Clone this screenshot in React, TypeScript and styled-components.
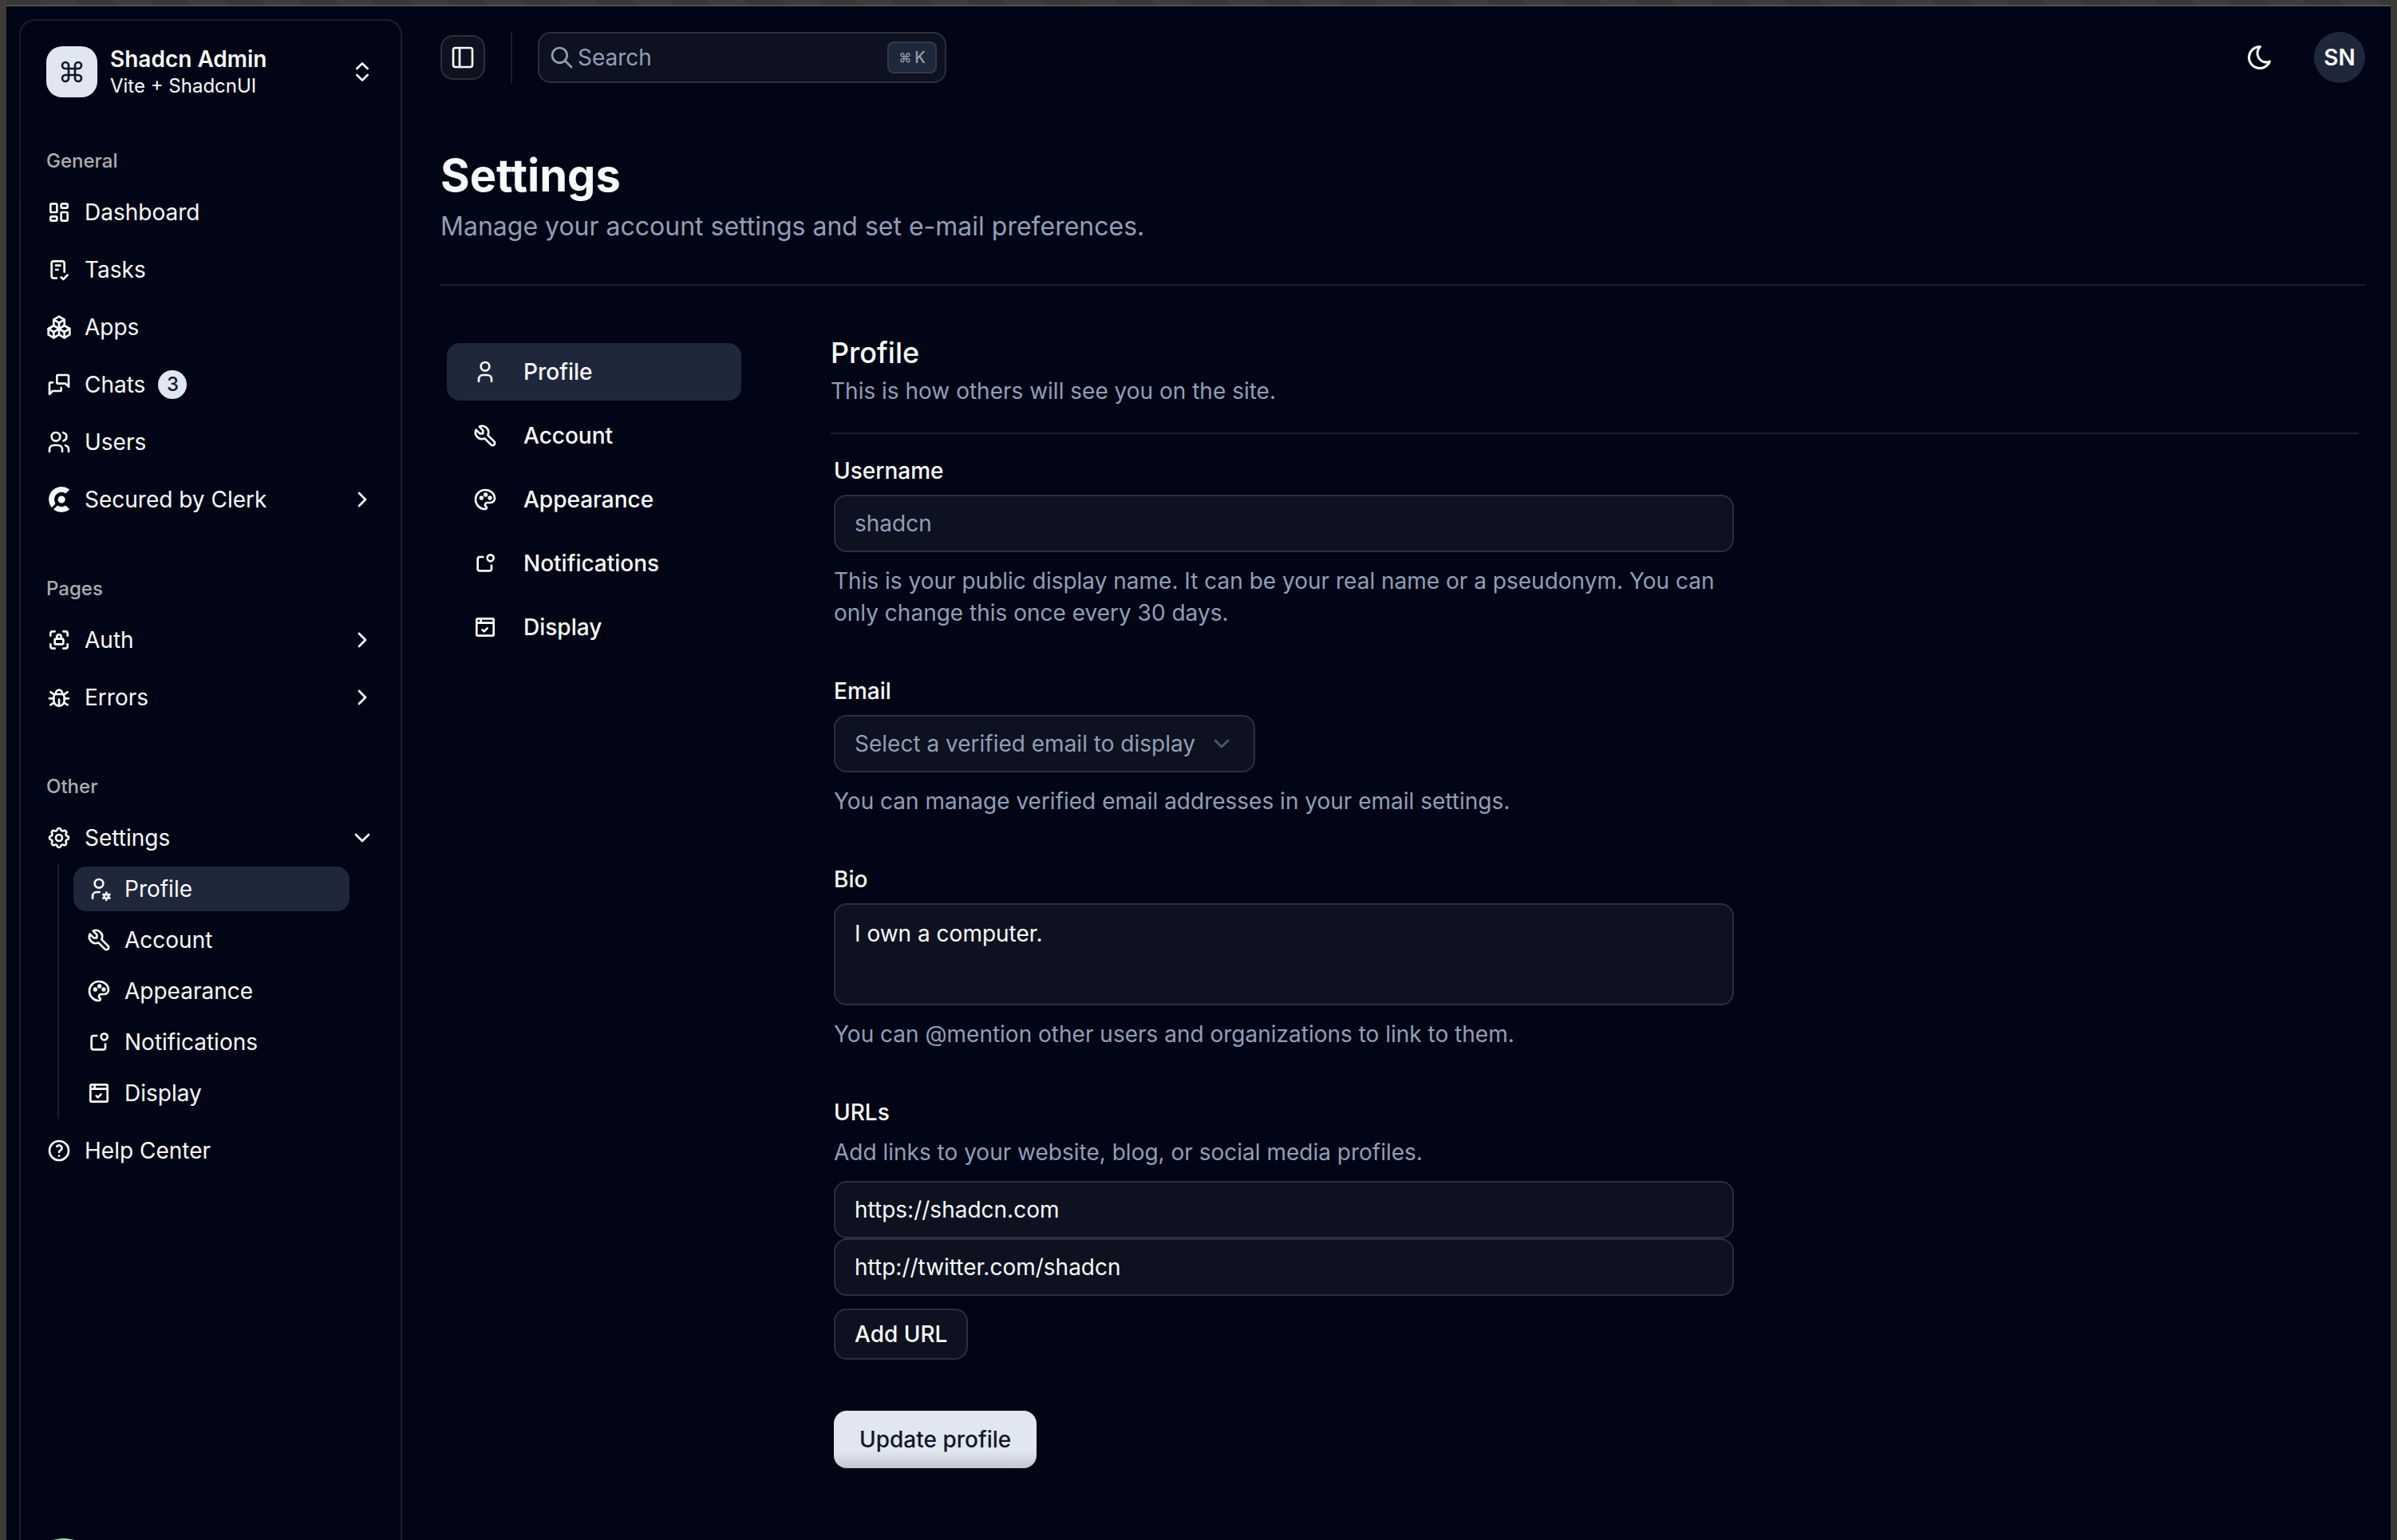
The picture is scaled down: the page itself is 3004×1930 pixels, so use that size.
import React from "react";
import styled, { createGlobalStyle, css } from "styled-components";
import {
  TbLayoutDashboard,
  TbChecklist,
  TbPackages,
  TbMessages,
  TbUsers,
  TbLockAccess,
  TbBug,
  TbSettings,
  TbUserCog,
  TbUser,
  TbTool,
  TbPalette,
  TbNotification,
  TbBrowserCheck,
  TbHelp,
  TbSearch,
  TbMoon,
} from "react-icons/tb";
import { SiClerk } from "react-icons/si";
import { ChevronRight, ChevronDown, ChevronsUpDown, Command, PanelLeft } from "lucide-react";

const color = {
  background: "#020515",
  foreground: "#f8fafc",
  muted: "#909fb5",
  accent: "#1f273a",
  primary: "#e2e6f0",
  onPrimary: "#0f172b",
  line: "rgba(255, 255, 255, 0.1)",
  fieldLine: "rgba(255, 255, 255, 0.17)",
  field: "rgba(255, 255, 255, 0.05)",
};

const GlobalStyle = createGlobalStyle`
  *, *::before, *::after { box-sizing: border-box; }
  body {
    margin: 0;
    background: #3c3b35;
    color: ${color.foreground};
    font-family: Inter, "Liberation Sans", sans-serif;
    font-size: 28px;
    line-height: 40px;
  }
  button, input, select, textarea { font: inherit; color: inherit; margin: 0; }
  button { cursor: pointer; }
  a { color: inherit; text-decoration: none; }
  h1, h2, p, ul { margin: 0; padding: 0; }
  ul { list-style: none; }
  svg { flex-shrink: 0; display: block; }
`;

const Desktop = styled.div`
  height: 100vh;
  overflow: hidden;
  display: flex;
  flex-direction: column;
`;

const TitleEdge = styled.div`
  flex: 0 0 8px;
  margin: 0 8px;
  border-bottom: 2px solid #505050;
  background: repeating-linear-gradient(37deg, #373737 0 28px, #3d3d3d 28px 56px);
`;

const Window = styled.div`
  flex: 1;
  min-height: 0;
  margin: 0 8px;
  display: flex;
  overflow: hidden;
  background: ${color.background};
`;

const SidebarRail = styled.aside`
  flex: 0 0 512px;
  padding: 16px 16px 0;
  display: flex;
`;

const Sidebar = styled.div`
  flex: 1;
  min-width: 0;
  padding: 16px;
  border: 2px solid ${color.line};
  border-bottom: 0;
  border-radius: 20px 20px 0 0;
  display: flex;
  flex-direction: column;
`;

const TeamButton = styled.button`
  height: 96px;
  padding: 0 16px;
  border: 0;
  background: none;
  display: flex;
  align-items: center;
  gap: 16px;
  text-align: left;
`;

const TeamLogo = styled.span`
  width: 64px;
  height: 64px;
  border-radius: 20px;
  display: grid;
  place-items: center;
  background: ${color.primary};
  color: ${color.onPrimary};
`;

const TeamText = styled.span`
  flex: 1;
  display: grid;
`;

const TeamName = styled.span`
  font-weight: 600;
  line-height: 36px;
`;

const TeamPlan = styled.span`
  font-size: 24px;
  line-height: 32px;
`;

const Group = styled.section`
  padding: 16px 0;
  & + & { margin-top: 16px; }
`;

const Nav = styled.nav`
  padding-top: 16px;
`;

const GroupLabel = styled.h2`
  height: 64px;
  padding: 0 16px;
  display: flex;
  align-items: center;
  font-size: 24px;
  font-weight: 500;
  color: rgba(250, 250, 250, 0.7);
`;

const MenuList = styled.ul`
  display: grid;
  gap: 8px;
`;

const menuRow = css`
  width: 100%;
  height: 64px;
  padding: 0 16px;
  display: flex;
  align-items: center;
  gap: 16px;
`;

const MenuLink = styled.a`${menuRow}`;

const MenuToggle = styled.button`
  ${menuRow}
  border: 0;
  background: none;
  text-align: left;
  & > :last-child { margin-left: auto; }
`;

const Count = styled.span`
  height: 36px;
  min-width: 36px;
  padding: 0 8px;
  border-radius: 18px;
  display: grid;
  place-items: center;
  background: ${color.primary};
  color: ${color.onPrimary};
  font-size: 24px;
  font-weight: 500;
  line-height: 32px;
`;

const SubList = styled.ul`
  margin: 0 26px 0 30px;
  padding: 4px 22px 4px 18px;
  border-left: 2px solid ${color.line};
  display: grid;
  gap: 8px;
`;

const SubLink = styled.a<{ $active?: boolean }>`
  height: 56px;
  padding: 0 16px;
  border-radius: 16px;
  display: flex;
  align-items: center;
  gap: 16px;
  background: ${(p) => (p.$active ? color.accent : "transparent")};
`;

const Page = styled.div`
  flex: 1;
  min-width: 0;
`;

const Header = styled.header`
  height: 128px;
  padding: 0 32px;
  display: flex;
  align-items: center;
  gap: 32px;
`;

const outlined = css`
  border: 2px solid ${color.fieldLine};
  border-radius: 16px;
  background: ${color.field};
  background-clip: padding-box;
`;

const PanelButton = styled.button`
  ${outlined}
  width: 56px;
  height: 56px;
  padding: 0;
  display: grid;
  place-items: center;
`;

const HeaderRule = styled.span`
  width: 2px;
  height: 64px;
  background: ${color.line};
`;

const SearchButton = styled.button`
  ${outlined}
  width: 512px;
  height: 64px;
  padding: 0 10px 0 12px;
  display: flex;
  align-items: center;
  gap: 4px;
  color: ${color.muted};
`;

const Shortcut = styled.kbd`
  height: 40px;
  margin-left: auto;
  padding: 0 12px;
  border: 2px solid #313a4e;
  border-radius: 8px;
  display: flex;
  align-items: center;
  gap: 4px;
  background: ${color.accent};
  font-family: inherit;
  font-size: 20px;
  font-weight: 500;
`;

const ShortcutSymbol = styled.span`
  font-size: 16px;
`;

const HeaderActions = styled.div`
  margin-left: auto;
  display: flex;
  align-items: center;
  gap: 32px;
`;

const ThemeButton = styled.button`
  width: 72px;
  height: 72px;
  padding: 0;
  border: 0;
  background: none;
  display: grid;
  place-items: center;
`;

const Avatar = styled.button`
  width: 64px;
  height: 64px;
  padding: 0;
  border: 0;
  border-radius: 50%;
  background: ${color.accent};
  font-weight: 600;
`;

const Main = styled.main`
  padding: 48px 32px;
`;

const PageTitle = styled.h1`
  font-size: 56px;
  font-weight: 700;
  line-height: 72px;
`;

const PageIntro = styled.p`
  margin-top: 4px;
  font-size: 32px;
  line-height: 48px;
  color: ${color.muted};
`;

const Rule = styled.hr<{ $space: number }>`
  height: 2px;
  margin: ${(p) => p.$space}px 0;
  border: 0;
  background: ${color.line};
`;

const Columns = styled.div`
  display: grid;
  grid-template-columns: 393px minmax(0, 1fr);
  gap: 96px;
`;

const SettingsNav = styled.nav`
  padding: 24px 16px 0 8px;
`;

const SettingsLinks = styled.ul`
  display: grid;
  gap: 8px;
`;

const SettingsLink = styled.a<{ $active?: boolean }>`
  height: 72px;
  padding: 0 32px;
  border-radius: 16px;
  display: flex;
  align-items: center;
  gap: 32px;
  font-weight: 500;
  background: ${(p) => (p.$active ? color.accent : "transparent")};
`;

const Section = styled.section`
  padding: 8px 8px 0 0;
`;

const SectionTitle = styled.h2`
  font-size: 36px;
  font-weight: 500;
  line-height: 56px;
`;

const Hint = styled.p`
  color: ${color.muted};
`;

const Form = styled.form`
  max-width: 1132px;
  padding-left: 4px;
  display: grid;
  gap: 64px;
`;

const Field = styled.div`
  display: grid;
  justify-items: start;
  gap: 16px;
`;

const Label = styled.label`
  font-weight: 500;
  line-height: 28px;
`;

const TextInput = styled.input`
  ${outlined}
  width: 100%;
  height: 72px;
  padding: 0 24px;
  &::placeholder { color: ${color.muted}; opacity: 1; }
`;

const TextArea = styled.textarea`
  ${outlined}
  display: block;
  width: 100%;
  height: 128px;
  padding: 16px 24px;
  resize: none;
`;

const SelectBox = styled.div`
  position: relative;
  color: ${color.muted};
  & > svg {
    position: absolute;
    top: 20px;
    right: 26px;
    opacity: 0.5;
    pointer-events: none;
  }
`;

const Select = styled.select`
  ${outlined}
  appearance: none;
  height: 72px;
  padding: 0 72px 0 24px;
`;

const Stack = styled.div`
  width: 100%;
`;

const AddButton = styled.button`
  ${outlined}
  height: 64px;
  padding: 0 24px;
  font-weight: 500;
`;

const SubmitButton = styled.button`
  justify-self: start;
  height: 72px;
  padding: 0 32px;
  border: 0;
  border-radius: 16px;
  background: linear-gradient(to bottom, ${color.primary} 70%, #c3c7d0 100%);
  color: ${color.onPrimary};
  font-weight: 500;
`;

const HelperBubble = styled.button`
  position: fixed;
  left: 34px;
  bottom: -90px;
  width: 92px;
  height: 92px;
  padding: 0;
  border: 0;
  border-radius: 50%;
  background: #a6d3a6;
`;

const general = [
  { label: "Dashboard", icon: TbLayoutDashboard },
  { label: "Tasks", icon: TbChecklist },
  { label: "Apps", icon: TbPackages },
  { label: "Chats", icon: TbMessages, count: "3" },
  { label: "Users", icon: TbUsers },
];

const pages = [
  { label: "Auth", icon: TbLockAccess },
  { label: "Errors", icon: TbBug },
];

const settings = [
  { label: "Profile", icon: TbUserCog, pageIcon: TbUser },
  { label: "Account", icon: TbTool, pageIcon: TbTool },
  { label: "Appearance", icon: TbPalette, pageIcon: TbPalette },
  { label: "Notifications", icon: TbNotification, pageIcon: TbNotification },
  { label: "Display", icon: TbBrowserCheck, pageIcon: TbBrowserCheck },
];

function AppSidebar() {
  return (
    <SidebarRail>
      <Sidebar>
        <TeamButton type="button">
          <TeamLogo>
            <Command size={32} />
          </TeamLogo>
          <TeamText>
            <TeamName>Shadcn Admin</TeamName>
            <TeamPlan>Vite + ShadcnUI</TeamPlan>
          </TeamText>
          <ChevronsUpDown size={32} />
        </TeamButton>
        <Nav aria-label="Main">
          <Group>
            <GroupLabel>General</GroupLabel>
            <MenuList>
              {general.map(({ label, icon: Icon, count }) => (
                <li key={label}>
                  <MenuLink href="#">
                    <Icon size={32} />
                    <span>{label}</span>
                    {count && <Count>{count}</Count>}
                  </MenuLink>
                </li>
              ))}
              <li>
                <MenuToggle type="button">
                  <SiClerk size={32} />
                  <span>Secured by Clerk</span>
                  <ChevronRight size={32} />
                </MenuToggle>
              </li>
            </MenuList>
          </Group>
          <Group>
            <GroupLabel>Pages</GroupLabel>
            <MenuList>
              {pages.map(({ label, icon: Icon }) => (
                <li key={label}>
                  <MenuToggle type="button">
                    <Icon size={32} />
                    <span>{label}</span>
                    <ChevronRight size={32} />
                  </MenuToggle>
                </li>
              ))}
            </MenuList>
          </Group>
          <Group>
            <GroupLabel>Other</GroupLabel>
            <MenuList>
              <li>
                <MenuToggle type="button" aria-expanded="true">
                  <TbSettings size={32} />
                  <span>Settings</span>
                  <ChevronDown size={32} />
                </MenuToggle>
                <SubList>
                  {settings.map(({ label, icon: Icon }, i) => (
                    <li key={label}>
                      <SubLink href="#" $active={i === 0}>
                        <Icon size={32} />
                        <span>{label}</span>
                      </SubLink>
                    </li>
                  ))}
                </SubList>
              </li>
              <li>
                <MenuLink href="#">
                  <TbHelp size={32} />
                  <span>Help Center</span>
                </MenuLink>
              </li>
            </MenuList>
          </Group>
        </Nav>
      </Sidebar>
    </SidebarRail>
  );
}

function TopBar() {
  return (
    <Header>
      <PanelButton type="button" aria-label="Toggle sidebar">
        <PanelLeft size={32} />
      </PanelButton>
      <HeaderRule />
      <SearchButton type="button">
        <TbSearch size={32} />
        <span>Search</span>
        <Shortcut>
          <ShortcutSymbol>⌘</ShortcutSymbol>
          <span>K</span>
        </Shortcut>
      </SearchButton>
      <HeaderActions>
        <ThemeButton type="button" aria-label="Toggle theme">
          <TbMoon size={36} />
        </ThemeButton>
        <Avatar type="button">SN</Avatar>
      </HeaderActions>
    </Header>
  );
}

function ProfileForm() {
  return (
    <Form onSubmit={(e) => e.preventDefault()}>
      <Field>
        <Label htmlFor="username">Username</Label>
        <TextInput id="username" placeholder="shadcn" />
        <Hint>
          This is your public display name. It can be your real name or a pseudonym. You can only
          change this once every 30 days.
        </Hint>
      </Field>
      <Field>
        <Label htmlFor="email">Email</Label>
        <SelectBox>
          <Select id="email" defaultValue="">
            <option value="">Select a verified email to display</option>
          </Select>
          <ChevronDown size={32} />
        </SelectBox>
        <Hint>You can manage verified email addresses in your email settings.</Hint>
      </Field>
      <Field>
        <Label htmlFor="bio">Bio</Label>
        <TextArea id="bio" defaultValue="I own a computer." />
        <Hint>You can @mention other users and organizations to link to them.</Hint>
      </Field>
      <Field>
        <Label htmlFor="url-0">URLs</Label>
        <Hint>Add links to your website, blog, or social media profiles.</Hint>
        <Stack>
          <TextInput id="url-0" defaultValue="https://shadcn.com" />
          <TextInput aria-label="URL 2" defaultValue="http://twitter.com/shadcn" />
        </Stack>
        <AddButton type="button">Add URL</AddButton>
      </Field>
      <SubmitButton type="submit">Update profile</SubmitButton>
    </Form>
  );
}

export default function App() {
  return (
    <Desktop>
      <GlobalStyle />
      <TitleEdge />
      <Window>
        <AppSidebar />
        <Page>
          <TopBar />
          <Main>
            <PageTitle>Settings</PageTitle>
            <PageIntro>Manage your account settings and set e-mail preferences.</PageIntro>
            <Rule $space={48} />
            <Columns>
              <SettingsNav aria-label="Settings">
                <SettingsLinks>
                  {settings.map(({ label, pageIcon: Icon }, i) => (
                    <li key={label}>
                      <SettingsLink href="#" $active={i === 0}>
                        <Icon size={32} />
                        <span>{label}</span>
                      </SettingsLink>
                    </li>
                  ))}
                </SettingsLinks>
              </SettingsNav>
              <Section>
                <SectionTitle>Profile</SectionTitle>
                <Hint>This is how others will see you on the site.</Hint>
                <Rule $space={32} />
                <ProfileForm />
              </Section>
            </Columns>
          </Main>
        </Page>
      </Window>
      <HelperBubble type="button" aria-label="Developer tools" />
    </Desktop>
  );
}
